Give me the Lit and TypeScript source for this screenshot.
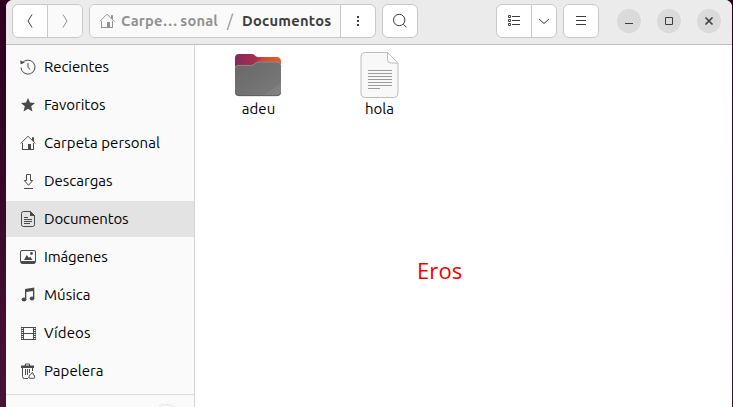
import { LitElement, html, svg, css } from "lit";
import { customElement, property } from "lit/decorators.js";
import { classMap } from "lit/directives/class-map.js";

const house = svg`<g fill="none" stroke="currentColor"><path d="M.7 8.500 8 1.200l7.300 7.300M12.500 5V2.500h1v4"/><path d="M2.500 8v6.500h4M13.500 8v6.500H11"/><path d="M8 9h3v6H8z" fill="currentColor" stroke="none"/><path d="M2 14.500h11.500"/></g>`;

const icons: Record<string, unknown> = {
  back: svg`<path class="l" d="M10 1.5 6 8l4 6.5"/>`,
  forward: svg`<path class="l" d="M6 1.5 10 8l-4 6.5"/>`,
  home: house,
  dots: svg`<path d="M7 3h2v2H7zM7 7h2v2H7zM7 11h2v2H7z"/>`,
  search: svg`<circle class="l" cx="7.2" cy="7" r="5.7"/><path class="l" d="m11.3 11.2 3.3 3.3"/>`,
  list: svg`<path class="l" d="M2.5 2.500h2v2h-2zM2.500 6.500h2v2h-2zM2.500 10.500h2v2h-2zM6 3.500h8M6 7.500h8M6 11.500h8"/>`,
  down: svg`<path class="l" d="m3 6 5 4.5L13 6"/>`,
  menu: svg`<path class="l" d="M3 3.5h10M3 7.5h10M3 11.5h10"/>`,
  minimize: svg`<path d="M4 10h8v1H4z"/>`,
  maximize: svg`<path class="l" d="M4.5 4.5h7v7h-7z"/>`,
  close: svg`<path class="l" stroke-width="1.6" d="m4.500 4.500 7 7m0-7-7 7"/>`,
  recent: svg`<path class="l" d="M2.2 4.2A7 7 0 1 1 1 8.500M8 4v4.500l2.200 2"/><path d="M.2 1.600 5 3.500.6 5.200z"/>`,
  star: svg`<path d="m8 1 2 4.600 5 .4-3.800 3.300 1.200 5.200L8 11.800l-4.400 2.700 1.200-5.200L1 6l5-.4z"/>`,
  download: svg`<path class="l" d="M6.500 1.500h4v6h2.200L8.500 12.300 4.300 7.500h2.200zM4 15.500h9"/>`,
  document: svg`<path class="l" d="M3.500.500h7l4 4v9q0 2-2 2h-9q-2 0-2-2v-11q0-2 2-2z"/><path d="M10 0l5 5h-5zM4 6h4v1H4zM4 8h8v1H4zM4 10h8v1H4zM4 12h6v1H4z"/>`,
  image: svg`<rect class="l" x=".5" y="1.500" width="15" height="12.500" rx="1.500"/><path d="M.500 12h15v1q0 2-2 2h-11Q.500 15 .500 13zM4 11l2.800-5 2.200 3 1.200-1.500L12.500 11z"/><circle cx="11.500" cy="4.500" r="1.400"/>`,
  music: svg`<path d="M5 2 14.300.500v11H13V4L6.300 5v8H5z"/><ellipse cx="4" cy="12.500" rx="2.400" ry="1.900"/><ellipse cx="12" cy="11.500" rx="2.300" ry="1.900"/>`,
  video: svg`<path class="l" d="M3.500 2v13M13.500 2v13M3.500 2.500h10M3.500 8.500h10M3.500 14.500h10"/><path d="M2 2v13M15 2v13" fill="none" stroke="currentColor" stroke-width="2" stroke-dasharray="1 1"/><path d="M1 2h1v13H1zM15 2h1v13h-1z" opacity=".6"/>`,
  trash: svg`<path d="M1 2.500h3.500L5.500.500h4l1 2H14V5H1z"/><path d="M6 1.500h3v1H6z" fill="#fafafa"/><path class="l" d="M2.500 5v8.500q0 2 2 2H8M12.500 5v3M5.500 6v6M7.500 6v6M9.500 6v4"/><path d="M12 9.500q2 .8 1 2 1.800.4 1.300 1.600 1.500 1.600-.3 2.200h-4q-2.400-.5-.7-2.200-.2-1.200 1.300-1.500z" fill="#fafafa" stroke="currentColor"/>`,
};

const places = [
  { icon: "recent", label: "Recientes", width: 65 },
  { icon: "star", label: "Favoritos", width: 61.5 },
  { icon: "home", label: "Carpeta personal", width: 116 },
  { icon: "download", label: "Descargas", width: 68.5 },
  { icon: "document", label: "Documentos", width: 84.5, selected: true },
  { icon: "image", label: "Imágenes", width: 63.5 },
  { icon: "music", label: "Música", width: 46.5 },
  { icon: "video", label: "Vídeos", width: 46.5 },
  { icon: "trash", label: "Papelera", width: 59.5 },
];

@customElement("ui-icon")
class UiIcon extends LitElement {
  @property() name = "";
  static styles = css`
    :host { display: block; width: 16px; height: 16px; flex: none; }
    svg { display: block; width: 16px; height: 16px; fill: currentColor; }
    .l { fill: none; stroke: currentColor; }
  `;
  render() {
    return html`<svg viewBox="0 0 16 16">${icons[this.name]}</svg>`;
  }
}

/* Text set to a given advance width, by spreading the difference over its letters. */
@customElement("set-text")
class SetText extends LitElement {
  @property() text = "";
  @property({ type: Number }) width = 0;
  static styles = css`
    :host { display: block; flex: none; white-space: nowrap; }
    span { display: inline-block; }
  `;
  render() {
    return html`<span>${this.text}</span>`;
  }
  firstUpdated() {
    const span = this.renderRoot.querySelector("span")!;
    const natural = span.getBoundingClientRect().width;
    span.style.letterSpacing = `${(this.width - natural) / this.text.length}px`;
  }
}

@customElement("app-root")
class AppRoot extends LitElement {
  static styles = css`
    :host {
      display: block; width: 733px; height: 407px; overflow: hidden;
      background: linear-gradient(#2c001e, #3b0b2b 60%, #4b1237);
      font: 15px/20px Ubuntu, "Noto Sans", sans-serif; color: #000;
    }
    * { box-sizing: border-box; }
    .window {
      margin-left: 6px; width: 726px; height: 407px; display: flex; flex-direction: column;
      background: #fff; border-radius: 7px 7px 0 0; overflow: hidden;
    }
    .header {
      height: 45px; flex: none; display: flex; align-items: flex-start; padding: 4px 11px 0 6px;
      background: #ebebeb; border-bottom: 1px solid #bfbfbf; color: #3d3d3d;
    }
    .group {
      height: 34px; flex: none; display: flex; margin-right: 6px; background: #fff;
      border: 1px solid #c8c8c8; border-radius: 6px; overflow: hidden;
    }
    .cell { flex: 1; display: flex; align-items: center; justify-content: center; }
    .cell + .cell, .path + .cell { border-left: 1px solid #c8c8c8; }
    .nav { width: 71px; margin-right: 6px; }
    .off { background: #fafafa; color: #929292; }
    .pathbar { width: 287px; }
    .path {
      width: 250px; flex: none; display: flex; align-items: center; padding-left: 9px;
      background: #fafafa; font-weight: 700; font-size: 14.7px;
    }
    .dim { color: #929292; }
    .path .dim.name { margin-left: 6px; word-spacing: -1px; }
    .slash { width: 24px; text-align: center; font-weight: 400; font-size: 16px; color: #929292; }
    .square { width: 36px; }
    .view { width: 61px; margin-left: 72px; }
    .view .first { flex: 0 0 34px; }
    .controls { display: flex; gap: 16px; margin: 5px 0 0 12px; }
    .control {
      width: 24px; height: 24px; border-radius: 50%; background: #dadada;
      display: flex; align-items: center; justify-content: center;
    }
    .body { flex: 1; display: flex; min-height: 0; }
    .sidebar {
      width: 189px; flex: none; padding-top: 4px; background: #fafafa;
      border-right: 1px solid #d5d5d5; overflow: hidden;
    }
    .place { height: 36px; margin-bottom: 2px; display: flex; align-items: center; gap: 8px; padding-left: 14px; }
    .place ui-icon { color: #4a4a4a; }
    .place set-text { margin-top: -1px; }
    .selected { background: #e3e3e3; }
    .rest { margin-top: 3px; border-top: 1px solid #dadada; padding: 9px 0 0 148px; }
    .places { height: 342px; }
    .knob { width: 24px; height: 24px; border: 1px solid #dedede; border-radius: 50%; background: #fff; }
    .files { flex: 1; display: flex; align-items: flex-start; padding: 5px 0 0 3px; position: relative; }
    .file { width: 121px; display: flex; flex-direction: column; align-items: center; }
    .file svg { display: block; width: 50px; height: 50px; }
    .file .folder { margin-right: 1px; }
    .file set-text { margin-top: -1px; }
    .note { position: absolute; left: 222px; top: 210px; color: #f20000; font-family: "Open Sans", sans-serif; font-size: 22px; line-height: 30px; }
  `;

  render() {
    return html`
      <div class="window">
        <div class="header">
          <div class="group nav">
            <div class="cell"><ui-icon name="back"></ui-icon></div>
            <div class="cell off"><ui-icon name="forward"></ui-icon></div>
          </div>
          <div class="group pathbar">
            <div class="path">
              <ui-icon class="dim" name="home"></ui-icon>
              <set-text class="dim name" text="Carpe… sonal" .width=${97}></set-text>
              <span class="slash">/</span>
              <set-text text="Documentos" .width=${89.5}></set-text>
            </div>
            <div class="cell"><ui-icon name="dots"></ui-icon></div>
          </div>
          <div class="group square"><div class="cell"><ui-icon name="search"></ui-icon></div></div>
          <div class="group view">
            <div class="cell first"><ui-icon name="list"></ui-icon></div>
            <div class="cell"><ui-icon name="down"></ui-icon></div>
          </div>
          <div class="group square"><div class="cell"><ui-icon name="menu"></ui-icon></div></div>
          <div class="controls">
            ${["minimize", "maximize", "close"].map((n) => html`<div class="control"><ui-icon name=${n}></ui-icon></div>`)}
          </div>
        </div>
        <div class="body">
          <div class="sidebar">
            <div class="places">
              ${places.map((p) => html`
                <div class=${classMap({ place: true, selected: !!p.selected })}>
                  <ui-icon name=${p.icon}></ui-icon>
                  <set-text .text=${p.label} .width=${p.width}></set-text>
                </div>`)}
            </div>
            <div class="rest"><div class="knob"></div></div>
          </div>
          <div class="files">
            <div class="file">
              <svg class="folder" viewBox="0 0 50 50">
                <defs>
                  <linearGradient id="tab"><stop stop-color="#832a5b"/><stop offset=".45" stop-color="#a82f50"/><stop offset=".6" stop-color="#d24536"/><stop offset="1" stop-color="#f05a24"/></linearGradient>
                  <linearGradient id="front" x2="1" y2="1"><stop stop-color="#676767"/><stop offset=".8" stop-color="#777"/><stop offset=".81" stop-color="#7e7e7e"/><stop offset="1" stop-color="#858585"/></linearGradient>
                </defs>
                <path d="M2 8q0-4 4-4h13q2 0 3.500 2 1 1 3 1h18q4.500 0 4.500 4.500V25H2z" fill="url(#tab)"/>
                <path d="M2 18q0-3 3-3h13q2 0 4-2 1.500-1.500 4-1.500h18q4 0 4 4V42q0 4-4 4H6q-4 0-4-4z" fill="url(#front)"/>
                <path d="M2.300 18q0-2.600 3-2.600h13q2 0 4-2Q24 12 26 12h18q4 0 4 4" fill="none" stroke="#999" stroke-width=".7"/>
                <path d="M2.300 42.500q.5 3.200 4 3.200h37.500q3.500 0 4-3.200" fill="none" stroke="#505050" stroke-width=".7"/>
              </svg>
              <set-text text="adeu" .width=${33.5}></set-text>
            </div>
            <div class="file">
              <svg viewBox="0 0 50 50">
                <path d="M10.500 2.500h22l10.500 10.500V43q0 4.500-4.500 4.500h-28Q6 47.500 6 43V7q0-4.500 4.500-4.500z" fill="#f8f8f8" stroke="#bcbcbc"/>
                <path d="M32.500 2.500 43 13h-7q-3.500 0-3.500-3.500z" fill="#fff" stroke="#bcbcbc"/>
                <path d="M13 20.500h24M13 23.500h24M13 26.500h24M13 29.500h24M13 32.500h24M13 35.500h24M13 38.500h12" stroke="#9b9b9b" fill="none"/>
              </svg>
              <set-text text="hola" .width=${29}></set-text>
            </div>
            <set-text class="note" text="Eros" .width=${45.5}></set-text>
          </div>
        </div>
      </div>`;
  }
}
